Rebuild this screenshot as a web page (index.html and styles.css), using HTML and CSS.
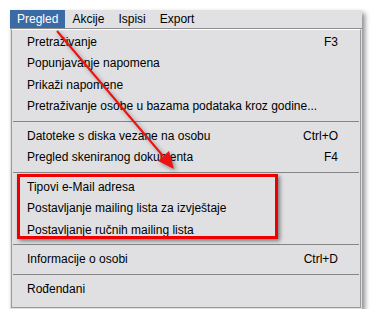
FILE: index.html
```html
<!DOCTYPE html>
<html lang="hr">
<head>
  <meta charset="UTF-8">
  <title>Pregled</title>
  <link rel="stylesheet" href="styles.css">
</head>
<body>
  <div class="shot">
    <div class="menubar">
      <span class="menu-title active">Pregled</span>
      <span class="menu-title">Akcije</span>
      <span class="menu-title">Ispisi</span>
      <span class="menu-title">Export</span>
    </div>
    <div class="dropdown">
      <div class="item"><span>Pretraživanje</span><span class="key">F3</span></div>
      <div class="item"><span>Popunjavanje napomena</span></div>
      <div class="item"><span>Prikaži napomene</span></div>
      <div class="item"><span>Pretraživanje osobe u bazama podataka kroz godine...</span></div>
      <div class="sep"></div>
      <div class="item"><span>Datoteke s diska vezane na osobu</span><span class="key">Ctrl+O</span></div>
      <div class="item"><span>Pregled skeniranog dokumenta</span><span class="key">F4</span></div>
      <div class="sep"></div>
      <div class="item"><span>Tipovi e-Mail adresa</span></div>
      <div class="item"><span>Postavljanje mailing lista za izvještaje</span></div>
      <div class="item"><span>Postavljanje ručnih mailing lista</span></div>
      <div class="sep"></div>
      <div class="item"><span>Informacije o osobi</span><span class="key">Ctrl+D</span></div>
      <div class="sep"></div>
      <div class="item"><span>Rođendani</span></div>
    </div>
  </div>

  <!-- annotation drawn over the screenshot -->
  <div class="highlight-box"></div>
  <svg class="arrow" width="373" height="312" viewBox="0 0 373 312">
    <line x1="57" y1="31" x2="163" y2="156" stroke="#ee1111" stroke-width="2"/>
    <polygon points="174,169 158,161 169,151" fill="#ee1111"/>
  </svg>
</body>
</html>
```

FILE: styles.css
```css
body {
  margin: 0;
  padding: 10px 0 0 10px;
  background-color: #fff;
  font-family: "Liberation Sans", Arial, sans-serif;
  font-size: 12px;
  color: #000;
}
.shot {
  width: 352px;
  background-color: #e1e1e4;
  box-shadow: 3px 3px 5px rgba(0, 0, 0, 0.45);
  padding-bottom: 1px;
}
.menubar {
  display: flex;
  height: 18px;
  border-bottom: 1px solid #8e8e8e;
}
.menu-title {
  padding: 0 7px;
  line-height: 18px;
}
.menu-title.active {
  background-color: #3b6ba5;
  color: #fff;
}
.dropdown {
  margin: 0 1px 0 1px;
  border: 1px solid #9a9a9a;
  border-top: 1px solid #fff;
  padding: 1px 0 7px;
  background-color: #e0e0e3;
}
.item {
  display: flex;
  justify-content: space-between;
  align-items: center;
  height: 21.5px;
  padding: 0 22px 0 15px;
}
.sep {
  height: 8px;
  display: flex;
  align-items: center;
}
.sep::after {
  content: "";
  display: block;
  width: 100%;
  height: 1px;
  background-color: #858585;
  margin: 0 1px;
}
.highlight-box {
  position: absolute;
  left: 17px;
  top: 174px;
  width: 255px;
  height: 59px;
  border: 3px solid #ee0000;
  box-shadow: 2px 2px 4px rgba(0, 0, 0, 0.45);
}
.arrow {
  position: absolute;
  left: 0;
  top: 0;
  filter: drop-shadow(2px 2px 2px rgba(0, 0, 0, 0.4));
}
```
